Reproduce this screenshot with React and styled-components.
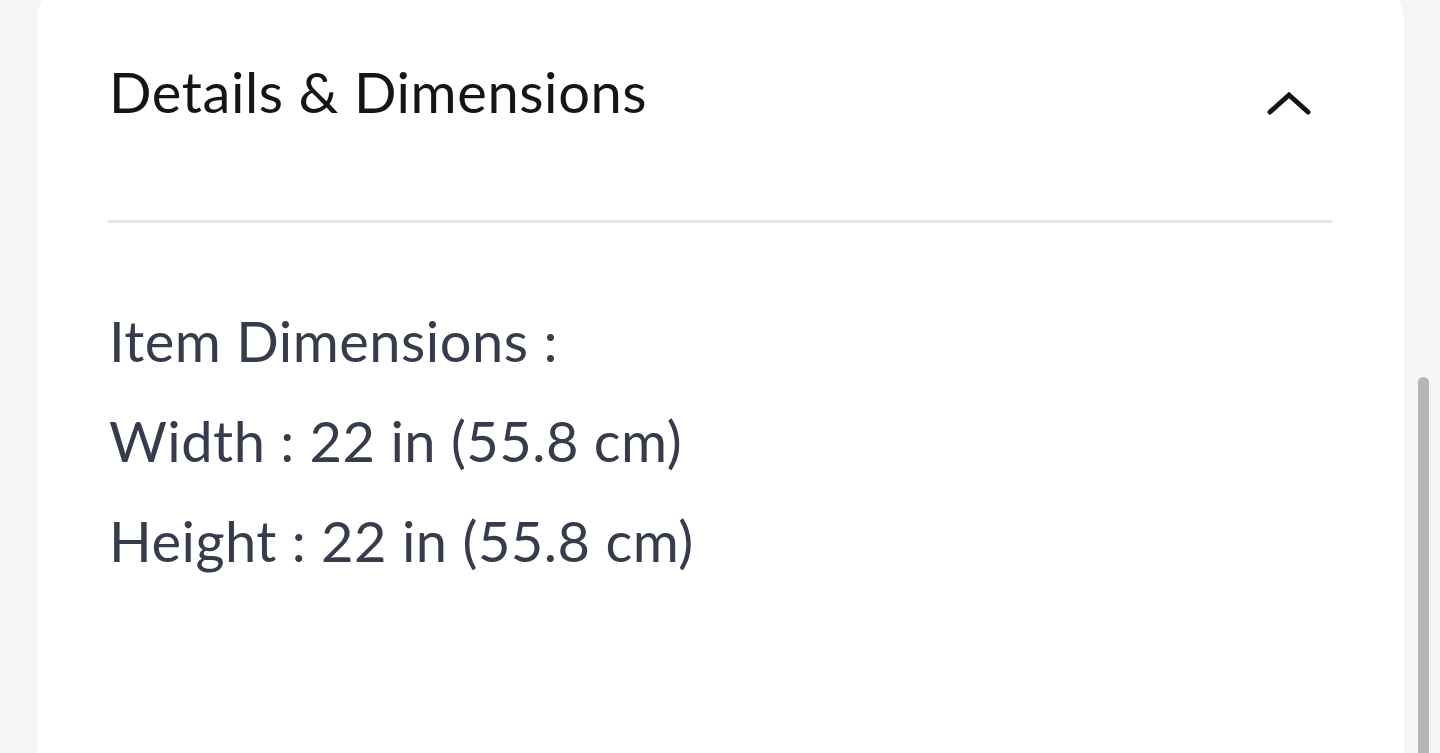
import React from 'react';
import styled, { createGlobalStyle } from 'styled-components';

const GlobalStyle = createGlobalStyle`
  html, body {
    margin: 0;
    padding: 0;
    background: #f5f5f5;
  }
  body {
    font-family: 'Lato', 'Inter', sans-serif;
  }
`;

const Page = styled.div`
  position: relative;
  height: 753px;
  overflow: hidden;
  padding: 0 36px 0 37px;
  background: #f5f5f5;
`;

const Card = styled.section`
  margin-top: -20px;
  height: 820px;
  background: #ffffff;
  border-radius: 40px;
  padding: 0 72px 0 71px;
`;

const Header = styled.div`
  display: flex;
  align-items: flex-start;
  justify-content: space-between;
  padding-top: 80px;
  height: 160px;
  border-bottom: 3px solid #e6e6e6;
`;

const Title = styled.h2`
  margin: 0 0 0 1px;
  font-size: 56px;
  font-weight: 400;
  letter-spacing: 0.6px;
  line-height: 64px;
  color: #151515;
`;

const Toggle = styled.button`
  display: flex;
  align-items: center;
  justify-content: center;
  width: 48px;
  height: 48px;
  margin: 19px 19px 0 0;
  padding: 0;
  border: 0;
  background: none;
  color: #151515;
`;

const Body = styled.div`
  display: flex;
  flex-direction: column;
  padding: 68px 0 0 1px;
`;

const Line = styled.p`
  margin: 0;
  font-size: 56px;
  letter-spacing: 0.5px;
  line-height: 100px;
  color: #363c4b;
`;

const Scrollbar = styled.div`
  position: absolute;
  right: 11px;
  top: 377px;
  bottom: 0;
  width: 11px;
  border-radius: 6px 6px 0 0;
  background: #b5b5b5;
`;

const ChevronUp = () => (
  <svg width="44" height="26" viewBox="0 0 44 26" fill="none">
    <path d="M3 22 L22 5 L41 22" stroke="currentColor" strokeWidth="5" strokeLinecap="round" strokeLinejoin="miter" />
  </svg>
);

export default function App() {
  return (
    <>
      <GlobalStyle />
      <Page>
        <Card>
          <Header>
            <Title>Details &amp; Dimensions</Title>
            <Toggle aria-label="Collapse">
              <ChevronUp />
            </Toggle>
          </Header>
          <Body>
            <Line>Item Dimensions :</Line>
            <Line>Width : 22 in (55.8 cm)</Line>
            <Line>Height : 22 in (55.8 cm)</Line>
          </Body>
        </Card>
        <Scrollbar />
      </Page>
    </>
  );
}
